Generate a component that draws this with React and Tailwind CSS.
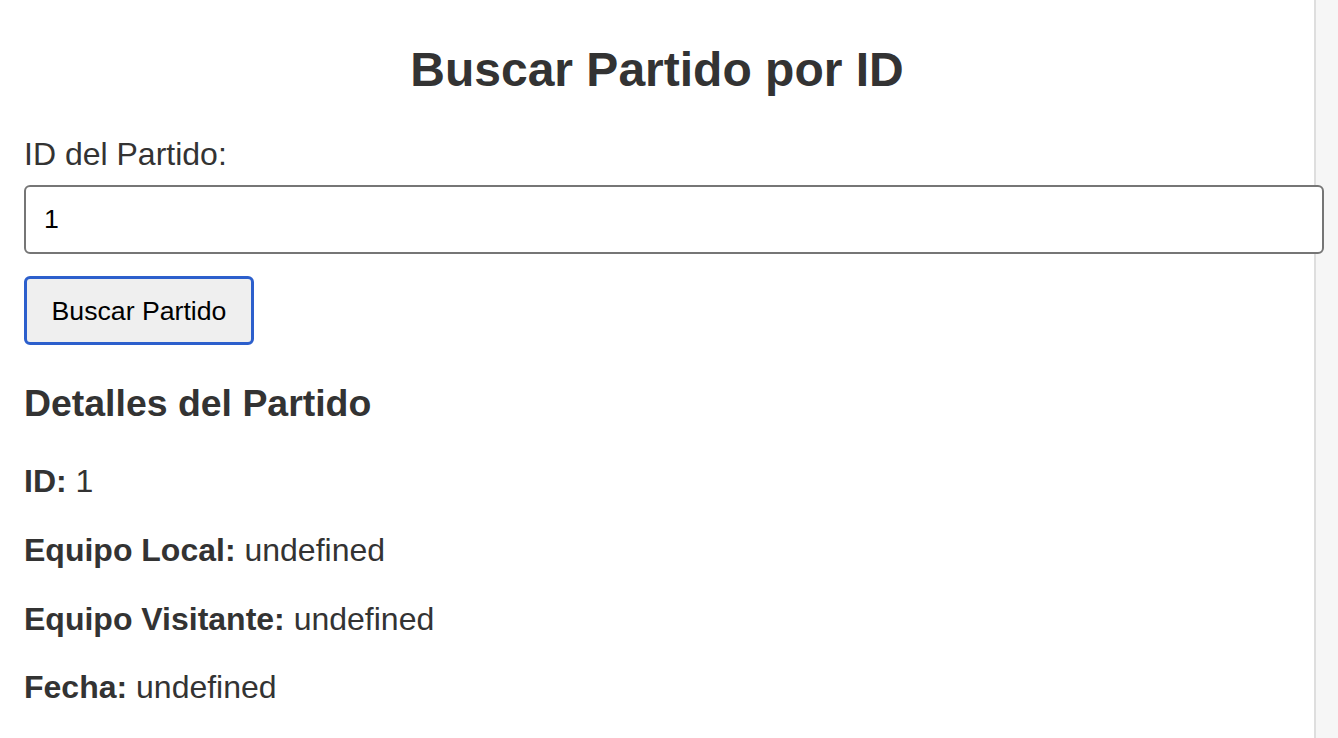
import { useState } from 'react'

const match = { id: 1 }

function Field({ label, value }) {
  return (
    <p className="mt-[32px] text-[32px] leading-[36.8px]">
      <strong className="font-bold">{label}:</strong> {value === undefined ? 'undefined' : value}
    </p>
  )
}

export default function App() {
  const [id, setId] = useState('1')

  return (
    <div className="flex min-h-screen bg-white text-[#333] font-['Liberation_Sans',Arial,sans-serif]">
      <main className="flex-1 min-w-0 px-[24px] pt-[42px] pb-[40px]">
        <h1 className="text-center text-[48px] leading-[55px] font-bold">Buscar Partido por ID</h1>

        <label htmlFor="partido-id" className="block mt-[39px] text-[32px] leading-[37px]">ID del Partido:</label>
        <input
          id="partido-id"
          type="text"
          value={id}
          onChange={(e) => setId(e.target.value)}
          className="relative block mt-[12px] w-[1300px] h-[69px] px-[18px] border-2 border-[#767676] rounded-[6px] text-[26.67px] text-black bg-white outline-none"
        />

        <button className="block mt-[22px] w-[230px] h-[69px] border-[3px] border-[#2c5fcc] rounded-[6px] bg-[#efefef] text-[26.67px] text-black">
          Buscar Partido
        </button>

        <h3 className="mt-[37px] text-[37.44px] leading-[43px] font-bold">Detalles del Partido</h3>
        <div className="mt-[38px]">
          <Field label="ID" value={match.id} />
          <Field label="Equipo Local" value={match.local} />
          <Field label="Equipo Visitante" value={match.visitante} />
          <Field label="Fecha" value={match.fecha} />
        </div>
      </main>
      <aside className="w-[24px] shrink-0 border-l-2 border-[#dedede] bg-[#f6f6f6]" />
    </div>
  )
}
